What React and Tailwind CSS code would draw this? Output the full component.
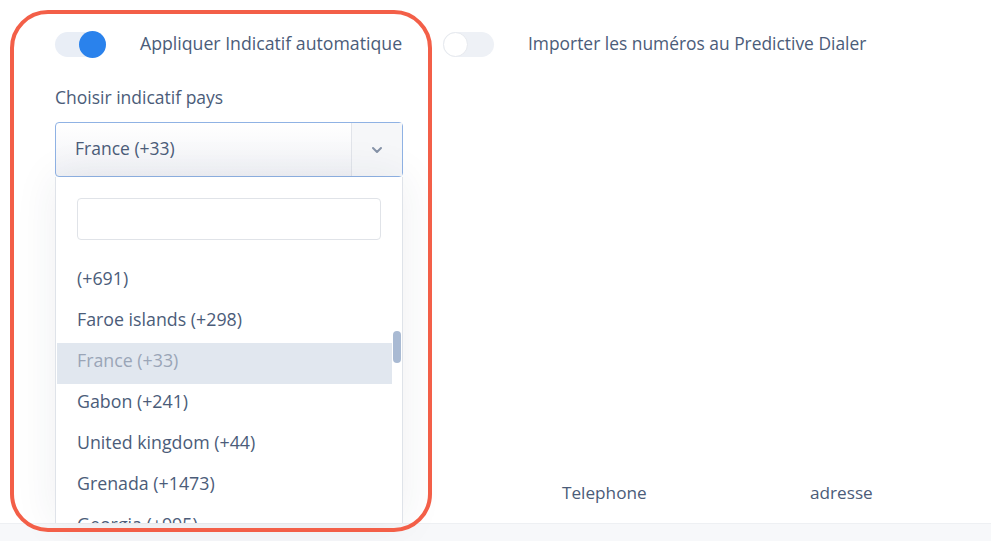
import React from "react";

const items = [
  { label: "(+691)" },
  { label: "Faroe islands (+298)" },
  { label: "France (+33)", active: true },
  { label: "Gabon (+241)" },
  { label: "United kingdom (+44)" },
  { label: "Grenada (+1473)" },
  { label: "Georgia (+995)" },
];

export default function App() {
  return (
    <div
      className="relative w-[991px] h-[541px] overflow-hidden bg-white text-[#4b5c79]"
      style={{ fontFamily: "'Open Sans', Lato, sans-serif" }}
    >
      <div className="relative flex h-[523px] flex-col">
        {/* toggles row */}
        <div className="flex items-center pl-[55px] pt-[32px]">
          <div className="flex w-[388px] items-center">
            <div className="relative h-[25px] w-[51px] rounded-full bg-[#e9eef6]">
              <div className="absolute right-0 top-[-1px] h-[27px] w-[27px] rounded-full bg-[#2a82ec]" />
            </div>
            <span className="ml-[34px] -mt-[4px] text-[17.7px] leading-[20px] whitespace-nowrap">Appliquer Indicatif automatique</span>
          </div>
          <div className="relative h-[25px] w-[51px] rounded-full bg-[#eef1f6]">
            <div className="absolute left-0 top-0 h-[25px] w-[25px] rounded-full border border-[#e6e9ee] bg-white" />
          </div>
          <span className="ml-[34px] -mt-[4px] text-[17.4px] leading-[20px] whitespace-nowrap">Importer les numéros au Predictive Dialer</span>
        </div>

        {/* label + select */}
        <div className="ml-[55px] mt-[30px] w-[348px]">
          <div className="text-[17.5px] leading-[20px]">Choisir indicatif pays</div>
          <div className="mt-[15px] flex h-[55px] rounded-[4px] border border-[#8fb2e4] bg-gradient-to-b from-white to-[#f1f2f6]">
            <div className="flex flex-1 items-center pl-[19px] pb-[3px] text-[17.5px]">France (+33)</div>
            <div className="flex w-[51px] items-center justify-center border-l border-[#e1e4ea] bg-[#f6f7f9]">
              <svg width="12" height="8" viewBox="0 0 12 8" fill="none">
                <path d="M2 2l4 4 4-4" stroke="#8693a8" strokeWidth="2" strokeLinecap="round" strokeLinejoin="round" />
              </svg>
            </div>
          </div>
        </div>

        {/* table header */}
        <div className="mt-auto flex h-[60px] items-center text-[17.2px]">
          <span className="ml-[562px] w-[248px]">Telephone</span>
          <span>adresse</span>
        </div>

        {/* dropdown menu */}
        <div className="absolute left-[55px] top-[177px] bottom-0 w-[348px] overflow-hidden border-x border-[#dfe3e9] bg-white shadow-[0_0_40px_rgba(40,50,80,0.08)]">
          <div className="px-[21px] pt-[21px]">
            <div className="h-[42px] rounded-[4px] border border-[#e0e3e8] bg-white" />
          </div>
          <div className="relative mt-[21px]">
            {items.map((it) => (
              <div
                key={it.label}
                className={`ml-[1px] mr-[10px] flex h-[41px] items-center pl-[20px] pb-[6px] text-[17.8px] ${
                  it.active ? "bg-[#e1e7ef] text-[#9aa5b7]" : ""
                }`}
              >
                {it.label}
              </div>
            ))}
            <div className="absolute right-[1px] top-[70px] h-[32px] w-[8px] rounded-full bg-[#a9bad3]" />
          </div>
        </div>
      </div>
      <div className="h-[18px] border-t border-[#eef0f3] bg-[#f7f8fa]" />

      {/* red annotation outline */}
      <div className="pointer-events-none absolute left-[10px] top-[10px] h-[522px] w-[422px] rounded-[38px] border-[4px] border-[#f35f48]" />
    </div>
  );
}
